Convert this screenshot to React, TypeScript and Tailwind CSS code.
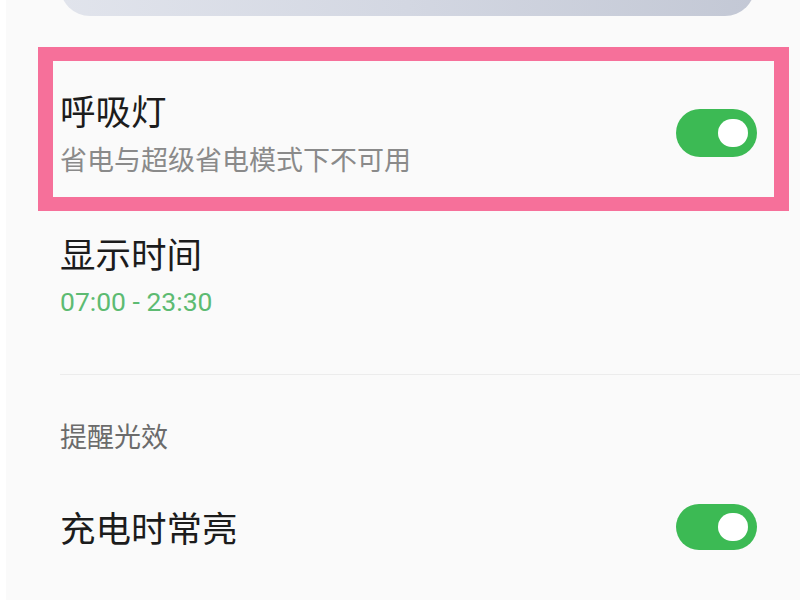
import React from "react";

const cjk = { fontFamily: '"Noto Sans CJK SC", "Noto Sans", sans-serif' };

function Toggle({ h }: { h: string }) {
  return (
    <div className={`flex w-[81px] ${h} shrink-0 items-center justify-end rounded-full bg-[#3cba54] pr-[9px]`}>
      <div className="h-[28px] w-[30px] rounded-full bg-white" />
    </div>
  );
}

export default function App() {
  return (
    <div className="flex h-[600px] w-[800px] overflow-hidden bg-[#fafafa]" style={cjk}>
      <div className="w-[6px] shrink-0 bg-white" />
      <div className="flex flex-1 flex-col">
        {/* top card remainder */}
        <div className="ml-[54px] mt-[-44px] h-[60px] w-[695px] rounded-b-[30px] bg-gradient-to-r from-[#e1e4ec] via-[#d3d7e2] to-[#c3c8d5]" />

        {/* highlighted row */}
        <div className="ml-[32px] mt-[31px] w-[751px] border-x-[15px] border-y-[14px] border-[#f6709a] bg-[#fafafa]">
          <div className="flex items-center justify-between pb-[21px] pl-[7px] pr-[17px] pt-[29px]">
            <div className="flex flex-col">
              <div className="h-[40px] text-[35.5px] leading-[40px] text-[#1c1c1c]">呼吸灯</div>
              <div className="mt-[12px] h-[34px] text-[27px] leading-[34px] text-[#8a8a8a]">省电与超级省电模式下不可用</div>
            </div>
            <Toggle h="h-[48px]" />
          </div>
        </div>

        {/* display time */}
        <div className="ml-[54px] mt-[22px] flex flex-col">
          <div className="h-[40px] text-[35.5px] leading-[40px] text-[#1c1c1c]">显示时间</div>
          <div
            className="mt-[14px] h-[30px] text-[26.5px] leading-[30px] text-[#5dbb72]"
            style={{ fontFamily: 'Roboto, "Noto Sans", sans-serif' }}
          >
            07:00 - 23:30
          </div>
        </div>

        <div className="ml-[54px] mt-[57px] h-px bg-[#ececec]" />

        <div className="ml-[54px] mt-[45px] h-[32px] text-[27px] leading-[32px] text-[#6b6b6b]">提醒光效</div>

        <div className="ml-[54px] mr-[43px] mt-[52px] flex items-center justify-between">
          <div className="h-[40px] text-[35.5px] leading-[40px] text-[#1c1c1c]">充电时常亮</div>
          <Toggle h="h-[46px]" />
        </div>
      </div>
    </div>
  );
}
